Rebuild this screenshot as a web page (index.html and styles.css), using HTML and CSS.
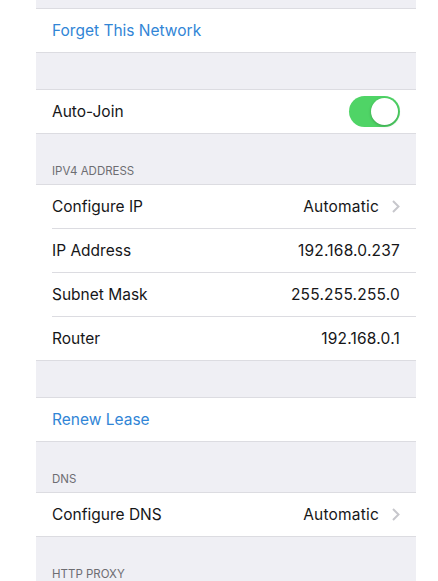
FILE: index.html
```html
<!DOCTYPE html>
<html lang="en">
<head>
  <meta charset="UTF-8">
  <meta name="viewport" content="width=device-width, initial-scale=1.0">
  <title>Wi-Fi Settings</title>
  <link rel="stylesheet" href="styles.css">
</head>
<body>
  <div class="screen">
    <div class="top-gap"></div>

    <div class="group">
      <div class="row"><span class="action">Forget This Network</span></div>
    </div>

    <div class="gap"></div>

    <div class="group">
      <div class="row">
        <span class="label">Auto-Join</span>
        <span class="toggle on"><span class="knob"></span></span>
      </div>
    </div>

    <div class="section-header">IPV4 ADDRESS</div>
    <div class="group">
      <div class="row">
        <span class="label">Configure IP</span>
        <span class="value">Automatic</span>
        <svg class="chevron" width="8" height="13" viewBox="0 0 8 13"><path d="M1 1l5.5 5.5L1 12" fill="none" stroke="#c7c7cc" stroke-width="2"/></svg>
      </div>
      <div class="row">
        <span class="label">IP Address</span>
        <span class="value">192.168.0.237</span>
      </div>
      <div class="row">
        <span class="label">Subnet Mask</span>
        <span class="value">255.255.255.0</span>
      </div>
      <div class="row">
        <span class="label">Router</span>
        <span class="value">192.168.0.1</span>
      </div>
    </div>

    <div class="gap"></div>

    <div class="group">
      <div class="row"><span class="action">Renew Lease</span></div>
    </div>

    <div class="section-header">DNS</div>
    <div class="group">
      <div class="row">
        <span class="label">Configure DNS</span>
        <span class="value">Automatic</span>
        <svg class="chevron" width="8" height="13" viewBox="0 0 8 13"><path d="M1 1l5.5 5.5L1 12" fill="none" stroke="#c7c7cc" stroke-width="2"/></svg>
      </div>
    </div>

    <div class="section-header">HTTP PROXY</div>
  </div>
</body>
</html>
```

FILE: styles.css
```css
:root {
  --bg: #efeff4;
  --line: #dcdce1;
  --blue: #3185d6;
  --green: #4fd466;
  --text: #161618;
  --muted: #6d6d72;
}

body {
  margin: 0;
  background: #fff;
  font-family: Inter, "Liberation Sans", Arial, sans-serif;
  color: var(--text);
  height: 581px;
  overflow: hidden;
}

.screen {
  margin-left: 36px;
  width: 380px;
  background: var(--bg);
  min-height: 581px;
}

.top-gap {
  height: 8px;
}

.gap {
  height: 36px;
}

.group {
  background: #fff;
  border-top: 1px solid var(--line);
  border-bottom: 1px solid var(--line);
}

.row {
  display: flex;
  align-items: center;
  height: 43px;
  margin-left: 16px;
  padding-right: 16px;
  font-size: 15.5px;
}

.row + .row {
  border-top: 1px solid var(--line);
}

.label {
  flex: 1;
}

.action {
  color: var(--blue);
}

.value {
  letter-spacing: 0.2px;
}

.chevron {
  margin-left: 13px;
}

.section-header {
  height: 50px;
  box-sizing: border-box;
  display: flex;
  align-items: flex-end;
  padding: 0 16px 6px;
  font-size: 11.5px;
  color: var(--muted);
}

.toggle {
  width: 51px;
  height: 31px;
  border-radius: 16px;
  background: var(--green);
  display: flex;
  align-items: center;
  justify-content: flex-end;
  padding: 0 2px;
  box-sizing: border-box;
}

.knob {
  width: 27px;
  height: 27px;
  border-radius: 50%;
  background: #fff;
  box-shadow: 0 1px 3px rgba(0, 0, 0, 0.25);
}
```
